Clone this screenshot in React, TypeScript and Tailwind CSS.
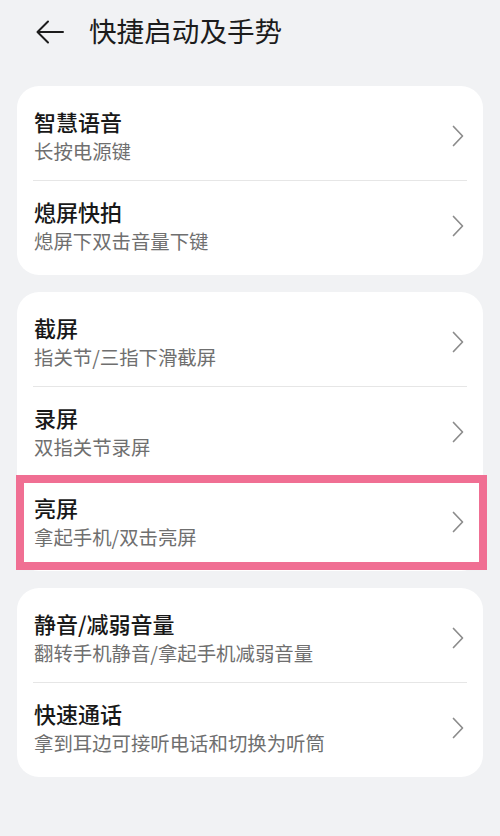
import React from 'react'

type Item = {
  title: string
  desc: string
  highlight?: boolean
}

const groups: Item[][] = [
  [
    { title: '智慧语音', desc: '长按电源键' },
    { title: '熄屏快拍', desc: '熄屏下双击音量下键' },
  ],
  [
    { title: '截屏', desc: '指关节/三指下滑截屏' },
    { title: '录屏', desc: '双指关节录屏' },
    { title: '亮屏', desc: '拿起手机/双击亮屏', highlight: true },
  ],
  [
    { title: '静音/减弱音量', desc: '翻转手机静音/拿起手机减弱音量' },
    { title: '快速通话', desc: '拿到耳边可接听电话和切换为听筒' },
  ],
]

const Chevron = () => (
  <svg width="12" height="22" viewBox="0 0 12 22" fill="none">
    <polyline
      points="1.5,1.5 10.5,11 1.5,20.5"
      stroke="#8c8c8c"
      strokeWidth="1.7"
      strokeLinecap="round"
      strokeLinejoin="round"
    />
  </svg>
)

const Row = ({ item }: { item: Item }) => (
  <div className="relative flex h-[89px] items-center justify-between pl-[17px] pr-[19px]">
    <div className="flex flex-col">
      <span className="text-[22px] font-medium leading-[30px] text-[#181818]">
        {item.title}
      </span>
      <span className="text-[19.4px] leading-[30px] text-[#6f6f6f]">
        {item.desc}
      </span>
    </div>
    <Chevron />
    {item.highlight && (
      <div className="pointer-events-none absolute -bottom-[4px] -left-[1px] -right-[4px] -top-[2px] border-[8px] border-[#f06f93]" />
    )}
  </div>
)

export default function App() {
  return (
    <div
      className="min-h-[836px] w-[500px] bg-[#f1f2f4]"
      style={{ fontFamily: '"Noto Sans CJK SC", "Noto Sans", sans-serif' }}
    >
      <div className="flex h-[64px] items-center pl-[36px]">
        <svg width="28" height="24" viewBox="0 0 28 24" fill="none">
          <path
            d="M27 12H2M12 1.5L1.5 12L12 22.5"
            stroke="#1c1c1c"
            strokeWidth="2"
            strokeLinecap="round"
            strokeLinejoin="round"
          />
        </svg>
        <span className="ml-[25px] pb-[2px] text-[27.6px] leading-none text-[#1c1c1c]">
          快捷启动及手势
        </span>
      </div>

      <div className="flex flex-col gap-[17px] px-[17px] pt-[22px]">
        {groups.map((group, gi) => (
          <div key={`group-${gi}`} className="rounded-[22px] bg-white py-[5px]">
            {group.map((item, ii) => (
              <React.Fragment key={`item-${gi}-${ii}`}>
                {ii > 0 && <div className="mx-[16px] h-px bg-[#e6e6e6]" />}
                <Row item={item} />
              </React.Fragment>
            ))}
          </div>
        ))}
      </div>
    </div>
  )
}
